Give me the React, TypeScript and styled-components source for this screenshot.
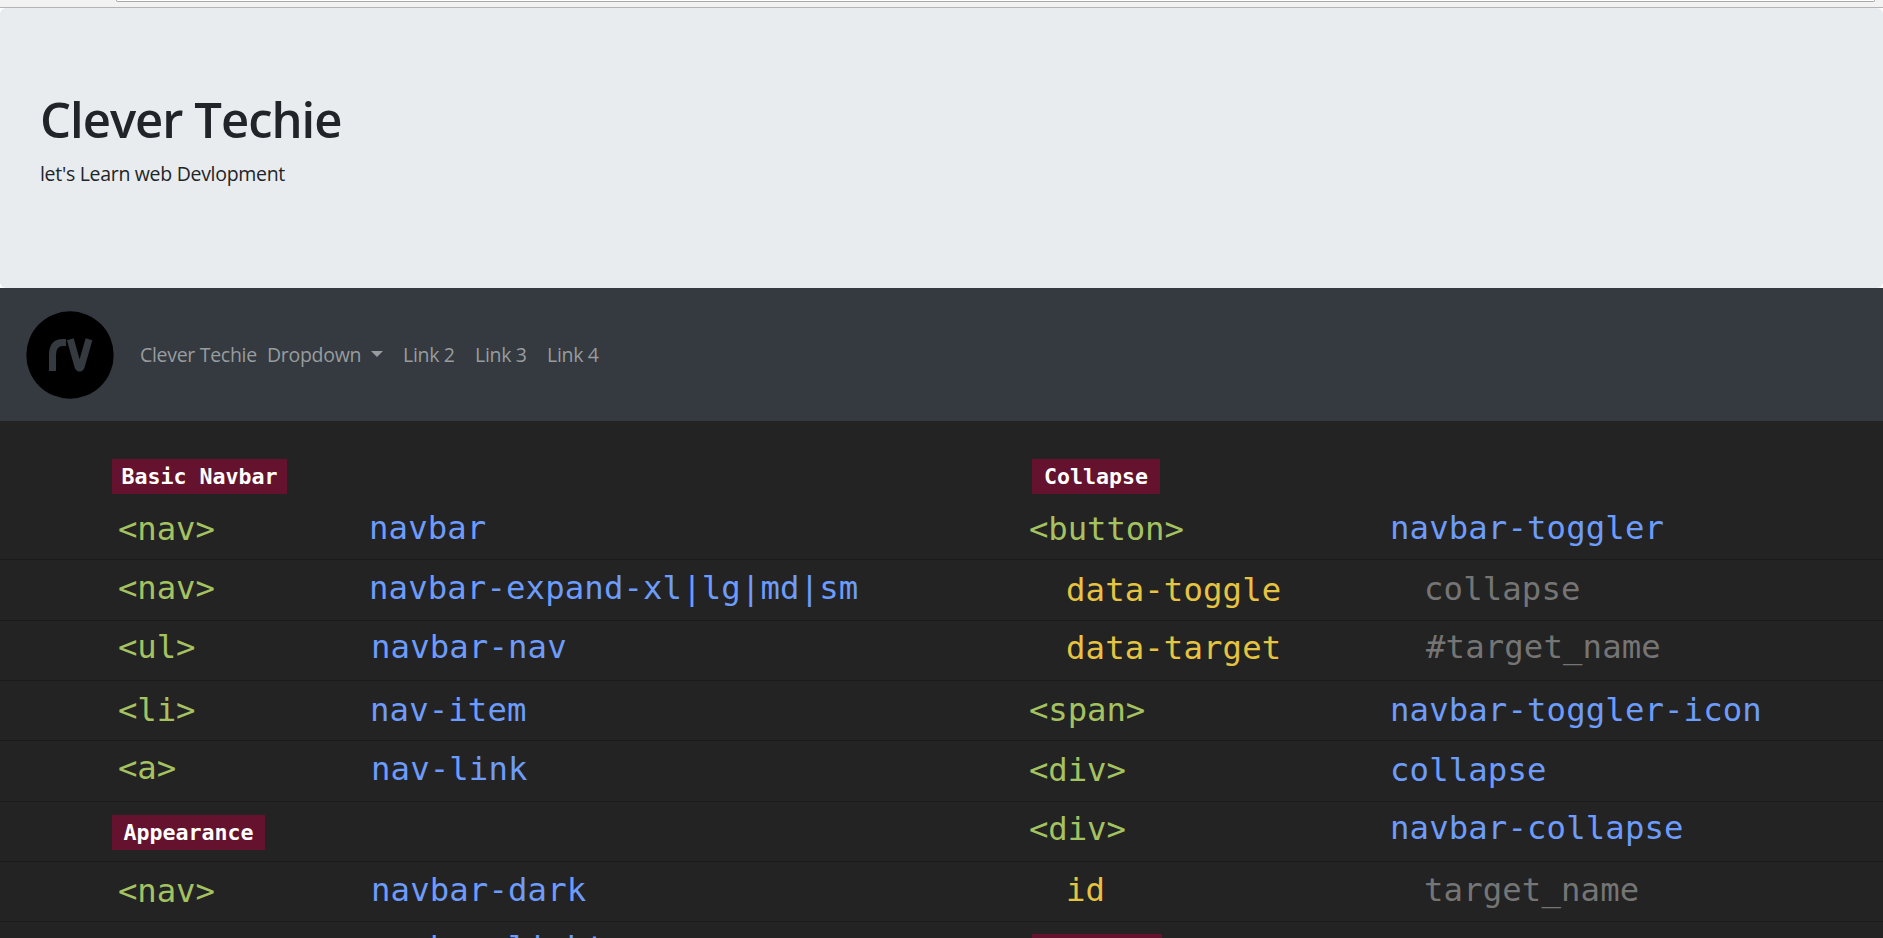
import React from 'react';
import styled, { createGlobalStyle } from 'styled-components';

const GlobalStyle = createGlobalStyle`
  * { box-sizing: border-box; }
  html, body { margin: 0; padding: 0; overflow: hidden; }
  body { background: #fff; color: #212529; font-family: 'Open Sans', 'Noto Sans', sans-serif; }
`;

const Page = styled.div`
  height: 938px;
  overflow: hidden;
  display: flex;
  flex-direction: column;
`;

const BrowserEdge = styled.div`
  flex: none;
  height: 8px;
  padding: 0 8px 0 116px;
  background: #f2f2f2;
  border-bottom: 1px solid #b4b4b4;
`;

const AddressBar = styled.div`
  height: 2px;
  background: #fff;
  border: 1px solid #a9a9a9;
  border-top: 0;
  border-radius: 0 0 3px 3px;
`;

const Hero = styled.header`
  flex: none;
  height: 280px;
  padding: 81px 40px;
  background: #e8ecef;
  border-radius: 6px;
`;

const Title = styled.h1`
  margin: 0 0 10px;
  font-size: 49px;
  line-height: 60px;
  font-weight: 600;
  letter-spacing: -1px;
  white-space: nowrap;
`;

const Lead = styled.p`
  margin: 0;
  font-size: 19.5px;
  line-height: 30px;
  letter-spacing: -0.3px;
`;

const Navbar = styled.nav`
  flex: none;
  display: flex;
  align-items: center;
  height: 133px;
  padding-left: 20px;
  background: #343a40;
`;

const Logo = styled.svg`
  width: 100px;
  height: 104px;
  margin: 0 20px 4px 0;
`;

const NavLink = styled.a<{ $width: number }>`
  display: flex;
  align-items: center;
  width: ${(p) => p.$width}px;
  font-size: 19.5px;
  line-height: 30px;
  letter-spacing: -0.3px;
  white-space: nowrap;
  color: #999c9f;
`;

const Caret = styled.span`
  margin: 0 0 1px 10px;
  border: 6px solid transparent;
  border-top-color: currentColor;
  border-bottom: 0;
`;

const Sheet = styled.main`
  flex: 1;
  min-height: 0;
  overflow: hidden;
  background: #232323;
  font-family: 'DejaVu Sans Mono', monospace;
`;

const Row = styled.div<{ $height: number; $line?: boolean }>`
  display: grid;
  grid-template-columns: 369px 660px 361px 1fr;
  align-items: start;
  height: ${(p) => p.$height}px;
  border-bottom: ${(p) => (p.$line === false ? 0 : 1)}px solid #1b1b1b;
`;

const tones = { tag: '#a5c261', value: '#6d9cfd', attr: '#e6c340', note: '#757575' };

const Code = styled.code<{ $tone: keyof typeof tones; $x: number; $y: number }>`
  padding-left: ${(p) => p.$x}px;
  margin-top: ${(p) => p.$y}px;
  font-family: inherit;
  font-size: 32.3px;
  line-height: 40px;
  letter-spacing: ${(p) => (p.$tone === 'tag' ? -0.1 : 0.13)}px;
  white-space: pre;
  color: ${(p) => tones[p.$tone]};
`;

const Badge = styled.h2<{ $x: number; $y: number; $width: number }>`
  display: flex;
  justify-content: center;
  width: ${(p) => p.$width}px;
  height: 35px;
  margin: ${(p) => p.$y}px 0 0 ${(p) => p.$x}px;
  font-size: 21.6px;
  line-height: 35px;
  font-weight: 700;
  white-space: pre;
  color: #fff;
  background: #64122d;
`;

type Cell =
  | { badge: string; x: number; y: number; width: number }
  | { text: string; tone: keyof typeof tones; x: number; y: number }
  | null;

const code = (text: string, tone: keyof typeof tones, x: number, y: number): Cell => ({ text, tone, x, y });
const badge = (label: string, x: number, y: number, width: number): Cell => ({ badge: label, x, y, width });

const rows: { height: number; line?: boolean; cells: Cell[] }[] = [
  { height: 79, line: false, cells: [badge('Basic Navbar', 112, 38, 175), null, badge('Collapse', 3, 38, 128), null] },
  { height: 60, cells: [code('<nav>', 'tag', 118, 9), code('navbar', 'value', 0, 8), code('<button>', 'tag', 0, 9), code('navbar-toggler', 'value', 0, 8)] },
  { height: 61, cells: [code('<nav>', 'tag', 118, 8), code('navbar-expand-xl|lg|md|sm', 'value', 0, 8), code('data-toggle', 'attr', 37, 10), code('collapse', 'note', 34, 9)] },
  { height: 60, cells: [code('<ul>', 'tag', 118, 6), code('navbar-nav', 'value', 2, 6), code('data-target', 'attr', 37, 7), code('#target_name', 'note', 36, 6)] },
  { height: 60, cells: [code('<li>', 'tag', 118, 9), code('nav-item', 'value', 1, 9), code('<span>', 'tag', 0, 9), code('navbar-toggler-icon', 'value', 0, 9)] },
  { height: 61, cells: [code('<a>', 'tag', 118, 7), code('nav-link', 'value', 2, 8), code('<div>', 'tag', 0, 9), code('collapse', 'value', 0, 9)] },
  { height: 60, cells: [badge('Appearance', 112, 13, 153), null, code('<div>', 'tag', 0, 7), code('navbar-collapse', 'value', 0, 6)] },
  { height: 60, cells: [code('<nav>', 'tag', 118, 9), code('navbar-dark', 'value', 2, 8), code('id', 'attr', 37, 8), code('target_name', 'note', 34, 8)] },
  { height: 60, cells: [null, code('navbar-light', 'value', 2, 6), badge('', 3, 12, 130), null] },
];

const CellView = ({ cell }: { cell: Cell }) => {
  if (!cell) return <span />;
  if ('badge' in cell) return <Badge $x={cell.x} $y={cell.y} $width={cell.width}>{cell.badge}</Badge>;
  return <Code $tone={cell.tone} $x={cell.x} $y={cell.y}>{cell.text}</Code>;
};

export default function App() {
  return (
    <Page>
      <GlobalStyle />
      <BrowserEdge><AddressBar /></BrowserEdge>
      <Hero>
        <Title>Clever Techie</Title>
        <Lead>let's Learn web Devlopment</Lead>
      </Hero>
      <Navbar>
        <Logo viewBox="0 0 100 104">
          <circle cx="50" cy="54" r="43.7" fill="#000" />
          <g fill="none" stroke="#343a40" strokeWidth="7">
            <path d="M32.5 70V54Q32.5 41.8 43 41.6H46" />
            <path d="M50.3 38.3L58 65.5Q59.6 68.5 61.2 65.5L69 38.3" strokeLinejoin="round" />
          </g>
        </Logo>
        <NavLink $width={127}>Clever Techie</NavLink>
        <NavLink $width={136}>Dropdown<Caret /></NavLink>
        <NavLink $width={72}>Link 2</NavLink>
        <NavLink $width={72}>Link 3</NavLink>
        <NavLink $width={72}>Link 4</NavLink>
      </Navbar>
      <Sheet>
        {rows.map((row, i) => (
          <Row key={i} $height={row.height} $line={row.line}>
            {row.cells.map((cell, j) => <CellView key={j} cell={cell} />)}
          </Row>
        ))}
      </Sheet>
    </Page>
  );
}
